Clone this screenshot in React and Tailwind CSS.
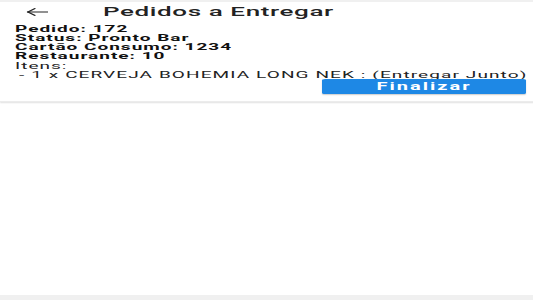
import { useState } from 'react';

// the reference is an Android screen stretched 2x horizontally,
// so the page is laid out at half width and scaled along x
const pedido = {
  numero: 172,
  status: 'Pronto Bar',
  cartao: 1234,
  restaurante: 10,
  itens: [{ qtd: 1, nome: 'CERVEJA BOHEMIA LONG NEK', obs: 'Entregar Junto' }],
};

function BackArrow() {
  return (
    <svg width="11" height="8" viewBox="0 0 11 8" fill="none" stroke="#222" strokeWidth="1" strokeLinecap="square">
      <path d="M10.5 4H1" />
      <path d="M4.3 0.7L1 4L4.3 7.3" />
    </svg>
  );
}

export default function App() {
  const [finalizado, setFinalizado] = useState(false);

  return (
    <div className="w-[266.5px] h-[300px] origin-top-left scale-x-200 bg-[#f0f0f0] pt-[2px] pb-[5px] flex flex-col font-['Roboto','Liberation_Sans',sans-serif] text-[#111]">
      <div className="flex-1 bg-white flex flex-col">
        <div className="bg-white shadow-[0_1px_1px_rgba(0,0,0,0.12)] border-b border-[#ececec]">
          <header className="h-[19px] flex items-center">
            <button className="ml-[12.5px] w-[11px] flex items-center">
              <BackArrow />
            </button>
            <h1 className="ml-[28px] text-[13px] leading-none font-medium text-[#222] tracking-[0.3px]">
              Pedidos a Entregar
            </h1>
          </header>

          <div className="pl-[7.5px] pr-0 pt-[3px] text-[9.5px] leading-[9px] tracking-[0.5px]">
            <p className="font-bold">Pedido: {pedido.numero}</p>
            <p className="font-bold">Status: {pedido.status}</p>
            <p className="font-bold">Cartão Consumo: {pedido.cartao}</p>
            <p className="font-bold">Restaurante: {pedido.restaurante}</p>
            <p className="mt-[0.5px] text-[#222]">Itens:</p>
            {pedido.itens.map((item, i) => (
              <p key={i} className="pl-[2px] text-[#222] tracking-[0.55px] whitespace-nowrap">
                - {item.qtd} x {item.nome} : ({item.obs})
              </p>
            ))}
          </div>

          <div className="flex justify-end pr-[3.5px] pt-[0.5px] pb-[7px]">
            <button
              onClick={() => setFinalizado(true)}
              className="w-[102px] h-[15px] rounded-[1.5px] bg-[#1e88e5] text-white text-[10px] font-bold tracking-[1px] leading-none shadow-[0_1px_1px_rgba(0,0,0,0.2)]"
            >
              {finalizado ? 'Finalizado' : 'Finalizar'}
            </button>
          </div>
        </div>
      </div>
    </div>
  );
}
